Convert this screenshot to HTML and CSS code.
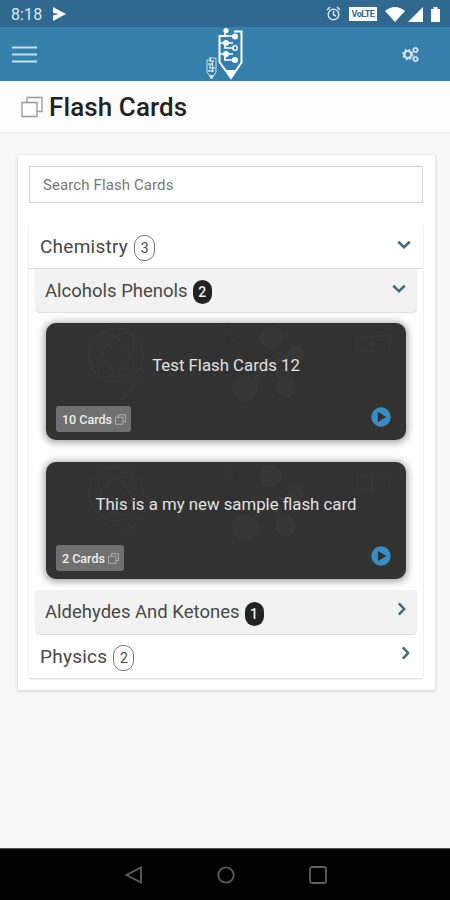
FILE: index.html
```html
<!DOCTYPE html>
<html lang="en">
<head>
<meta charset="utf-8">
<title>Flash Cards</title>
<link rel="stylesheet" href="styles.css">
</head>
<body>
<svg class="defs" aria-hidden="true">
  <symbol id="cards" viewBox="0 0 22 22"><path d="M1 6.5h15v14H1zM6 6.5v-5h15v14h-5" fill="none" stroke="currentColor" stroke-width="1.3"/></symbol>
  <symbol id="down" viewBox="0 0 14 10"><path d="M1.3 1.8 7 7.2l5.7-5.4" fill="none" stroke="currentColor" stroke-width="2.6"/></symbol>
  <symbol id="right" viewBox="0 0 10 14"><path d="m1.8 1.3 5.4 5.7-5.4 5.7" fill="none" stroke="currentColor" stroke-width="2.5"/></symbol>
  <symbol id="play" viewBox="0 0 20 20"><circle cx="10" cy="10" r="9.7" fill="#398dc4"/><path d="m6.8 4.7 8.4 5.3-8.4 5.3z" fill="#303030"/></symbol>
  <symbol id="science" viewBox="0 0 360 117">
    <g fill="none" stroke="#363636" stroke-width="2"><circle cx="70" cy="32" r="27"/><ellipse cx="70" cy="32" rx="13" ry="25" transform="rotate(35 70 32)"/><ellipse cx="70" cy="32" rx="12" ry="24" transform="rotate(-35 70 32)"/><path d="m95 55-19 22M178 0l9 18M311 14h15v14h-15zM332 13h12v15"/></g>
    <g fill="#373737" stroke="#373737"><circle cx="225" cy="14" r="11"/><circle cx="250" cy="32" r="8"/><circle cx="199" cy="65" r="13"/><circle cx="240" cy="64" r="10"/><path d="m199 65 26-25M225 40l25-8M225 40l15 24" stroke-width="4"/></g>
  </symbol>
</svg>
<div class="screen">
  <div class="status">
    <time>8:18</time>
    <svg class="sent" viewBox="0 0 13 14"><path d="m0 0 13 7-13 7V8.500l6-1.500-6-1z" fill="#fff"/></svg>
    <div class="signals">
      <svg width="15" height="16" viewBox="0 0 15 16" fill="none" stroke="#d5e4ed" stroke-width="1.5"><circle cx="7.5" cy="8.5" r="5.3"/><path d="M7.5 5v4l2.5 1M1 4l3-3M14 4l-3-3"/></svg>
      <span class="volte">VoLTE</span>
      <svg class="wifi" width="20" height="15" viewBox="0 0 20 15"><path d="M0 4Q10-4 20 4L10 15z" fill="#fff"/></svg>
      <svg class="cell" width="15" height="15" viewBox="0 0 15 15"><path d="M15 0v15H0z" fill="#fff"/></svg>
      <svg class="battery" width="9" height="15" viewBox="0 0 9 15"><path d="M0 2h2.5V0h4v2H9v13H0z" fill="#fff"/></svg>
    </div>
  </div>
  <header class="appbar">
    <svg class="menu" width="25" height="17" viewBox="0 0 25 17"><path d="M0 1.5h25M0 8.5h25M0 15.5h25" stroke="#c8e1ee" stroke-width="2.2"/></svg>
    <svg class="logo" width="38" height="53" viewBox="0 0 38 53" fill="none" stroke="#fff">
      <path d="M24 3M29 3.500h7.500v31L26 50 14.500 34V8H23" stroke-width="2"/>
      <path d="m20 42 6 9 6-9z" fill="#fff" stroke="none"/>
      <path d="M20 2v6h10M15 15h13M20 15v5h9M15 26h13M20 26v6h10" stroke-width="1.700"/>
      <g fill="#fff" stroke="none"><circle cx="21" cy="2.600" r="2.600"/><circle cx="30" cy="8.500" r="3"/><circle cx="21" cy="15" r="3"/><circle cx="21" cy="26" r="3"/><circle cx="30" cy="32" r="3"/></g>
      <circle cx="30" cy="20" r="2.300" stroke-width="1.300"/>
      <g stroke="#cbe1ed"><path d="M5.500 30H11v14l-4.500 7L2 44V32h3.500z"/><path d="M5 29v4h4M3 36h5M5 36v4h5M3 43h6M7.500 33v11" stroke-width="1.300"/><path d="m5 47 1.500 4L8 47" fill="#fff"/></g>
    </svg>
    <svg class="gears" width="17" height="17" viewBox="0 0 17 17" fill="none" stroke="#d3e6f0"><circle cx="5.800" cy="8.500" r="3.500" stroke-width="2.200"/><circle cx="5.800" cy="8.500" r="4.900" stroke-width="1.500" stroke-dasharray="2 1.850"/><circle cx="13.500" cy="4" r="2" stroke-width="1.600"/><circle cx="13.500" cy="13" r="2" stroke-width="1.600"/><g stroke-dasharray="1.200 1.100"><circle cx="13.500" cy="4" r="2.900" stroke-width=".8"/><circle cx="13.500" cy="13" r="2.900" stroke-width=".8"/></g></svg>
  </header>
  <div class="heading"><svg class="title-icon"><use href="#cards"/></svg><h1>Flash Cards</h1></div>
  <main>
    <section class="panel">
      <input class="search" type="text" placeholder="Search Flash Cards" aria-label="Search Flash Cards">
      <div class="accordion">
        <div class="subject"><span>Chemistry</span><b class="ring">3</b><svg class="down"><use href="#down"/></svg></div>
        <div class="topics">
          <div class="topic"><span>Alcohols Phenols</span><b class="pill">2</b><svg class="down"><use href="#down"/></svg></div>
          <div class="decks">
            <article class="deck"><svg class="pattern"><use href="#science"/></svg><h2>Test Flash Cards 12</h2><div class="deck-foot"><span class="count">10 Cards<svg><use href="#cards"/></svg></span><svg class="play"><use href="#play"/></svg></div></article>
            <article class="deck"><svg class="pattern"><use href="#science"/></svg><h2>This is a my new sample flash card</h2><div class="deck-foot"><span class="count">2 Cards<svg><use href="#cards"/></svg></span><svg class="play"><use href="#play"/></svg></div></article>
          </div>
          <div class="topic last"><span>Aldehydes And Ketones</span><b class="pill">1</b><svg class="right"><use href="#right"/></svg></div>
        </div>
        <div class="subject physics"><span>Physics</span><b class="ring">2</b><svg class="right"><use href="#right"/></svg></div>
      </div>
    </section>
  </main>
  <nav class="system">
    <svg viewBox="0 0 18 18"><path d="M16 1.500v15L1.500 9z"/></svg>
    <svg viewBox="0 0 18 18"><circle cx="9" cy="9" r="7.700"/></svg>
    <svg viewBox="0 0 18 18"><rect x="1" y="1" width="16" height="16" rx="2"/></svg>
  </nav>
</div>
</body>
</html>
```
FILE: styles.css
```css
* { box-sizing: border-box; }
body { margin: 0; font-family: Roboto, sans-serif; color: #444; }
svg { display: block; flex-shrink: 0; }
.defs { position: absolute; width: 0; height: 0; }
.screen { width: 450px; height: 900px; display: flex; flex-direction: column; background: #f8f8f8; overflow: hidden; }

.status { height: 27px; flex-shrink: 0; display: flex; align-items: center; padding: 1px 10px 0 11px; background: #2f6990; color: #dce8ef; }
.status time { width: 42px; font-size: 16px; letter-spacing: .1px; }
.sent { width: 13px; height: 14px; }
.signals { margin-left: auto; display: flex; align-items: center; }
.volte { width: 28px; height: 14px; margin-left: 8px; background: #fff; color: #2f6990; font-size: 9px; font-weight: 700; line-height: 14px; text-align: center; letter-spacing: -.5px; }
.wifi { margin-left: 8px; }
.cell { margin-left: 3px; }
.battery { margin-left: 8px; }

.appbar { height: 54px; flex-shrink: 0; display: grid; grid-template-columns: 193px 1fr 17px; align-items: center; padding: 0 31px 0 12px; background: #357fab; }

.heading { height: 53px; flex-shrink: 0; display: flex; align-items: center; gap: 6px; padding-left: 21px; background: #fcfcfc; border-bottom: 2px solid #efefef; }
.title-icon { width: 22px; height: 22px; color: #999; }
h1 { margin: 0; font-size: 26px; line-height: 32px; font-weight: 500; color: #222; letter-spacing: .1px; }

main { flex: 1; padding: 21px 15px 0 18px; }
.panel { height: 535px; padding: 11px 12px 0 11px; background: #fff; border-radius: 2px; box-shadow: 0 1px 3px 1px #dcdcdc; }
.search { display: block; width: 100%; height: 37px; padding: 0 13px; border: 1px solid #d2d2d2; border-radius: 0; outline: 0; background: #fff; font: 15px Roboto, sans-serif; letter-spacing: .1px; }
.search::placeholder { color: #777; opacity: 1; }
.accordion { margin-top: 21px; box-shadow: 0 1px 2px #d4d4d4; }
.subject, .topic { display: flex; align-items: center; color: #484848; }
.subject { height: 45px; padding: 0 12px 0 11px; border-bottom: 1px solid #d8d8d8; font-size: 19px; }
.subject span { letter-spacing: .25px; }
.subject .down, .topic .down, .subject .right, .topic .right { margin-left: auto; color: #456c7c; }
.down { width: 14px; height: 10px; margin-bottom: 3px; }
.right { width: 10px; height: 14px; margin-bottom: 6px; }
b { display: inline-block; text-align: center; font-weight: 400; }
.ring { width: 21px; height: 26px; margin: 4px 0 0 6px; border: 1px solid #777; border-radius: 10px; font-size: 14px; line-height: 25px; }
.pill { width: 19px; height: 24px; margin: 3px 0 0 5px; border-radius: 10px; background: #222; color: #eee; font-size: 14px; line-height: 24px; font-weight: 500; }
.topics { padding: 0 6px; }
.topic { height: 43px; padding: 0 11px 0 10px; background: #f2f2f2; border-radius: 0 0 5px 5px; box-shadow: 0 1px 1px #ddd; font-size: 18.5px; }
.topic span { letter-spacing: 0; }
.decks { display: grid; gap: 22px; padding: 11px 11px; }
.deck { height: 117px; display: grid; grid-template-rows: 83px 34px; border-radius: 10px; background: #323232; box-shadow: 0 1px 7px 2px #aaa; overflow: hidden; position: relative; }
.pattern { position: absolute; inset: 0; width: 100%; height: 100%; }
h2 { position: relative; margin: 0; align-self: center; text-align: center; color: #e1e1e1; font-size: 16.8px; line-height: 22px; font-weight: 400; }
.deck-foot { position: relative; display: flex; align-items: flex-start; justify-content: space-between; padding: 0 15px 0 10px; }
.count { height: 26px; display: flex; align-items: center; gap: 3px; padding: 0 5px 0 6px; border-radius: 3px; background: #707070; color: #eee; font-size: 12.5px; font-weight: 500; }
.count svg { width: 11px; height: 11px; color: #ccc; }
.play { width: 20px; height: 20px; margin-top: 1px; }
.topic.last { height: 44px; }
.physics { height: 44px; border-bottom: 0; padding-right: 12px; }
.topic.last .right { margin-right: -1px; }

.system { height: 52px; flex-shrink: 0; display: flex; justify-content: center; align-items: center; gap: 74px; padding-left: 1px; background: #000; border-top: 1px solid #555; }
.system svg { width: 18px; height: 18px; fill: none; stroke: #5e5e5e; stroke-width: 1.8; }
```
